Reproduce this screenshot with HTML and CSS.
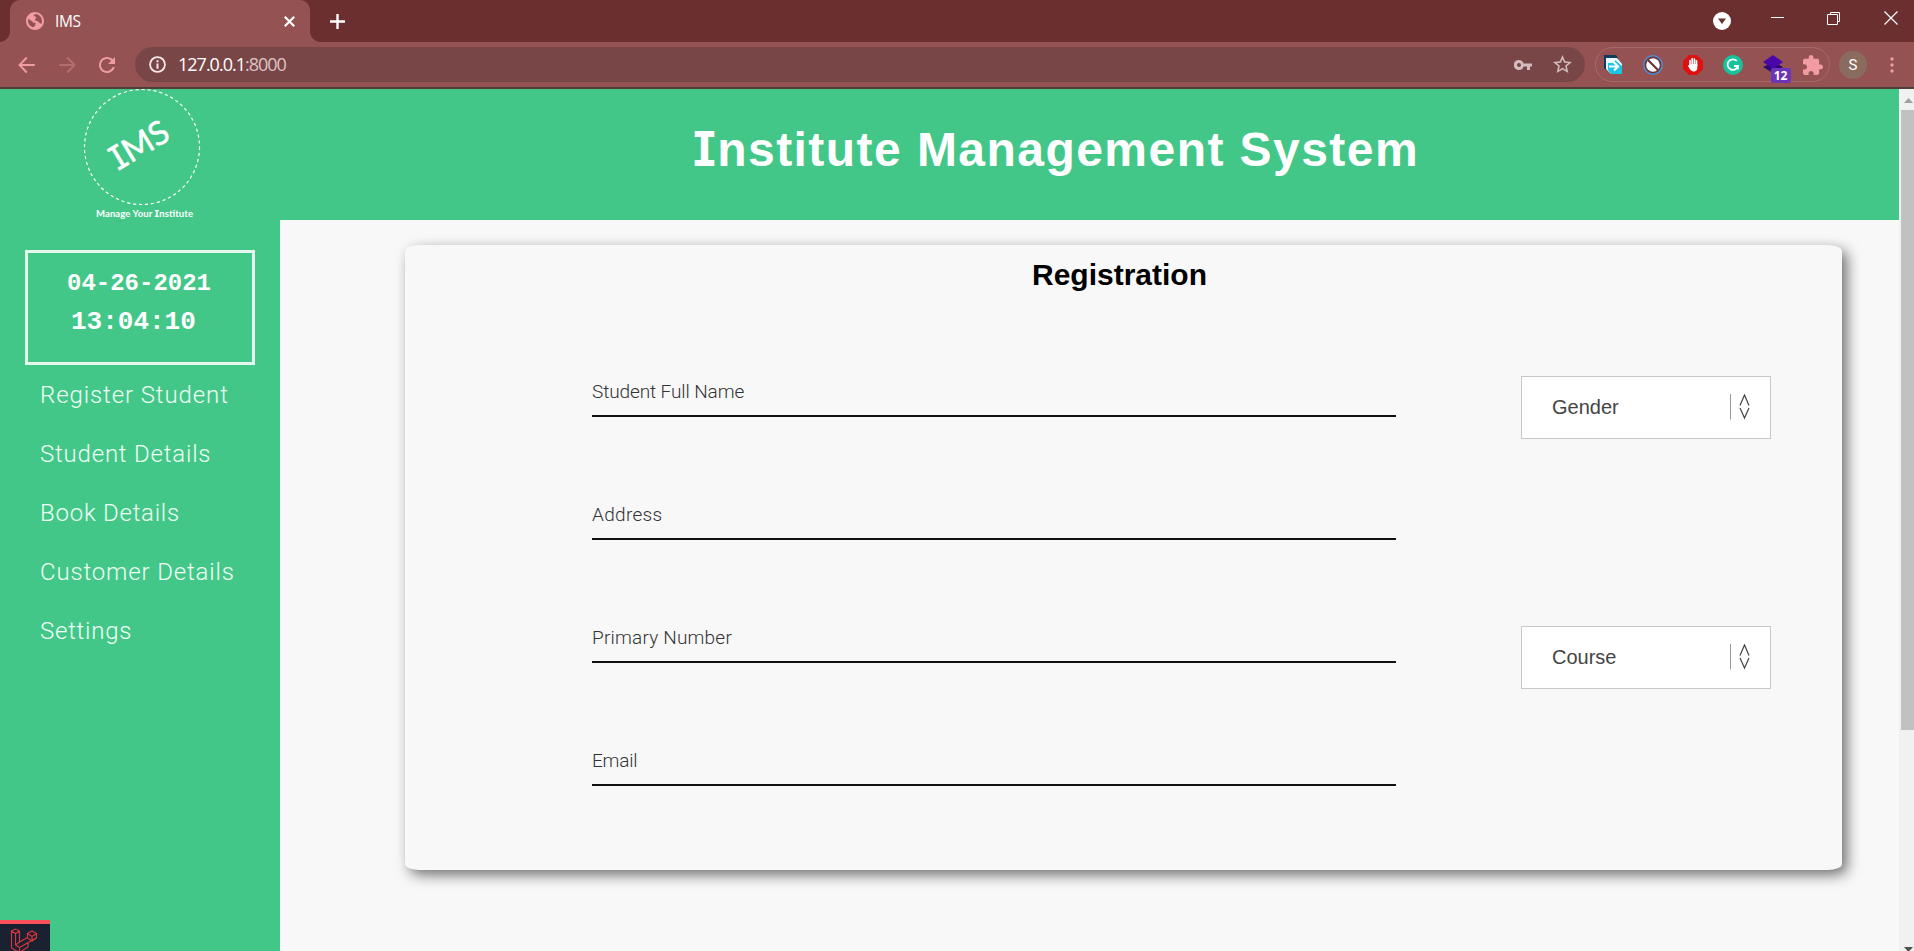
FILE: index.html
```html
<!DOCTYPE html>
<html lang="en">
<head>
<meta charset="utf-8">
<title>IMS</title>
<link rel="stylesheet" href="styles.css">
</head>
<body>
<div class="window">
  <div class="tabbar">
    <div class="tab">
      <svg class="globe" viewBox="2 2 20 20"><path fill="#f09ca0" d="M12 2C6.480 2 2 6.480 2 12s4.480 10 10 10 10-4.480 10-10S17.520 2 12 2zM4.500 9.500 9 12.500c.8.600 1 1.500 2 1.500h1.500v2.500l-2 2.500c-3.500-.5-6.200-3.500-6.200-7 0-.9 0-1.700.2-2.500zM13 4.200c3.800.5 6.800 3.800 6.800 7.800 0 1-.2 2-.5 2.800-1.300.2-2.500-.8-3.300-1.800-1-1-3.500-.5-3.800-2-.2-1.500 1.300-2 1-3.200-.6-1.300-2.500-.6-2.500-1.800 0-1 1-1.800 2.300-1.800z"/></svg>
      <span class="tab-title">IMS</span>
      <svg class="tab-close" viewBox="0 0 10 10"><path d="M.7.7l8.600 8.600M9.300.7L.7 9.300" stroke="#fff" stroke-width="1.900"/></svg>
    </div>
    <svg class="new-tab" viewBox="0 0 14 14"><path d="M7 0v14M0 7h14" stroke="#fff" stroke-width="2.200"/></svg>
    <div class="controls">
      <svg width="18" height="18" viewBox="0 0 18 18"><circle cx="9" cy="9" r="9" fill="#fff"/><path d="M5 6.500h8L9 12z" fill="#6b2f2f"/></svg>
      <svg width="13" height="18" viewBox="0 0 13 18"><path d="M0 5.500h13" stroke="#fff"/></svg>
      <svg width="14" height="18" viewBox="0 0 14 18"><path d="M.5 4.500h10v10H.5zM3.500 4V2.500h9v9H11" fill="none" stroke="#fff"/></svg>
      <svg width="14" height="18" viewBox="0 0 14 18"><path d="M.5 2.500l13 13M13.500 2.500l-13 13" stroke="#fff" stroke-width="1.200"/></svg>
    </div>
  </div>
  <div class="toolbar">
    <div class="nav">
      <svg class="i24" viewBox="0 0 24 24"><path d="M19.800 12H5M11.800 4.500 4.500 12l7.300 7.500" fill="none" stroke="#f09ca0" stroke-width="1.900"/></svg>
      <svg class="i24 dim" viewBox="0 0 24 24"><path d="M4.200 12H19M12.200 4.500l7.300 7.500-7.300 7.500" fill="none" stroke="#f09ca0" stroke-width="1.900"/></svg>
      <svg class="i24" viewBox="0 0 24 24"><path fill="#f09ca0" d="M17.650 6.350C16.200 4.900 14.210 4 12 4c-4.420 0-7.990 3.580-7.990 8s3.570 8 7.990 8c3.730 0 6.840-2.550 7.730-6h-2.080c-.82 2.330-3.040 4-5.650 4-3.310 0-6-2.690-6-6s2.690-6 6-6c1.660 0 3.140.69 4.220 1.780L13 11h7V4l-2.350 2.350z"/></svg>
    </div>
    <div class="omnibox">
      <svg class="info" viewBox="0 0 16 16"><circle cx="8" cy="8" r="7" fill="none" stroke="#fbe6e6" stroke-width="1.700"/><path d="M8 7v5M8 4v1.800" stroke="#fbe6e6" stroke-width="1.900"/></svg>
      <span class="url">127.0.0.1<span class="port">:8000</span></span>
      <svg class="key" viewBox="0 0 18 12"><path fill="#d2bcbd" fill-rule="evenodd" d="M5 1a5 5 0 1 0 4.600 6.500H13V11h3V7.500h2v-3H9.600A5 5 0 0 0 5 1zm0 3a2 2 0 1 1 0 4 2 2 0 0 1 0-4z"/></svg>
      <svg class="star" viewBox="2 2 20 20"><path fill="#d2bcbd" d="M22 9.240l-7.190-.62L12 2 9.190 8.630 2 9.240l5.460 4.730L5.820 21 12 17.270 18.180 21l-1.630-7.030L22 9.240zM12 15.400l-3.760 2.270 1-4.280-3.320-2.880 4.380-.38L12 6.100l1.710 4.040 4.380.38-3.320 2.880 1 4.280L12 15.400z"/></svg>
    </div>
    <div class="extensions">
      <svg class="i20" viewBox="0 0 20 20"><path d="M1 0h12l2 3v12H3L1 13z" fill="#123a5c"/><path d="M3 3h11l5 6v10H8l-5-5z" fill="#e8fafd"/><path d="M5 8h7V5l7 6v8H8l-3-4z" fill="#19c5e6"/><path d="M6 11.500h8M11 7.500l4 4-4 4" fill="none" stroke="#fff" stroke-width="2.200"/></svg>
      <svg class="i20" viewBox="0 0 20 20"><circle cx="10" cy="10" r="9.200" fill="#6f3136" stroke="#4d8fd6" stroke-width="1.500"/><circle cx="10" cy="10" r="6.800" fill="#fff"/><path d="M5 5l10 10" stroke="#6f3136" stroke-width="2.200"/></svg>
      <svg class="i20" viewBox="0 0 20 20"><path d="M6 0h8l6 6v8l-6 6H6l-6-6V6z" fill="#e01010"/><path d="M7 10V5.500M9.200 10V3.700M11.400 10V4M13.500 11V5.800" stroke="#fff" stroke-width="1.700" stroke-linecap="round"/><path d="M6.200 9h8.100v4c0 2-1.300 3.500-3.400 3.500S7.500 15 6.200 13L4.800 10.500l1.400-.2z" fill="#fff"/></svg>
      <svg class="i20" viewBox="0 0 20 20"><circle cx="10" cy="10" r="10" fill="#16c39a"/><path d="M13.800 6A5.300 5.300 0 1 0 15 11h-4M15 10v4.500" fill="none" stroke="#fff" stroke-width="1.800"/></svg>
      <div class="ext-badge">
        <svg class="i20" viewBox="0 0 20 20"><path d="M0 12l10-5 10 5-10 6z" fill="#2c0873"/><path d="M0 7l10-7 10 7-10 7z" fill="#4a06a8"/></svg>
        <span class="badge">12</span>
      </div>
      <svg class="i20" viewBox="2 1 21 21"><path fill="#f09ca0" d="M20.500 11H19V7c0-1.100-.9-2-2-2h-4V3.500C13 2.120 11.880 1 10.500 1S8 2.120 8 3.500V5H4c-1.100 0-1.990.9-1.990 2v3.800H3.500c1.490 0 2.700 1.210 2.700 2.700s-1.210 2.700-2.700 2.700H2V20c0 1.100.9 2 2 2h3.800v-1.500c0-1.490 1.210-2.700 2.700-2.700 1.490 0 2.700 1.210 2.700 2.700V22H17c1.100 0 2-.9 2-2v-4h1.500c1.380 0 2.500-1.120 2.500-2.500S21.880 11 20.500 11z"/></svg>
    </div>
    <span class="avatar">S</span>
    <svg class="dots" viewBox="0 0 4 16"><circle cx="2" cy="2" r="1.700" fill="#f09ca0"/><circle cx="2" cy="8" r="1.700" fill="#f09ca0"/><circle cx="2" cy="14" r="1.700" fill="#f09ca0"/></svg>
  </div>

  <div class="page">
    <aside class="sidebar">
      <svg class="logo" viewBox="0 0 180 133"><circle cx="82" cy="58" r="57.500" fill="none" stroke="#fff" stroke-width="1.200" stroke-dasharray="3.200 2.800"/>
        <text class="logo-mark" transform="translate(58 82) rotate(-31)"><tspan class="serif-i">I</tspan>MS</text>
        <text class="logo-tag" x="36" y="128" textLength="97">Manage Your <tspan class="serif-i">I</tspan>nstitute</text></svg>
      <div class="clock"><div class="date">04-26-2021</div><div class="time">13:04:10</div></div>
      <nav class="menu">
        <a class="w1">Register Student</a>
        <a class="w2">Student Details</a>
        <a class="w3">Book Details</a>
        <a class="w4">Customer Details</a>
        <a class="w5">Settings</a>
      </nav>
      <div class="debugbar"><svg viewBox="0 0 28 24"><path d="M1.500 3 5.500 1l4 2-4 2.500-4-2.500v17l8 4.500L18 19v-4.500M5.500 5.500v11.500l4 2.500M9.500 3v11l-4 3M9.500 14l8-4.500M9.500 19.500 26 10M9.500 19.500v5M17.500 5.500 22 3l4.500 2.500L22 8.500zM17.500 5.500v4.500l4.500 3V8.500M26.500 5.500V10L22 13" fill="none" stroke="#d9363e" stroke-width="1.100"/></svg></div>
    </aside>
    <div class="body">
      <header class="header"><h1><span class="serif-i">I</span>nstitute Management System</h1></header>
      <main class="main">
        <section class="card">
          <h2>Registration</h2>
          <div class="form">
            <div class="fields">
              <label class="field f1">Student Full Name</label>
              <label class="field f2">Address</label>
              <label class="field f3">Primary Number</label>
              <label class="field f4">Email</label>
            </div>
            <div class="selects">
              <div class="select"><span>Gender</span><svg viewBox="0 0 20 26"><path d="M.5 0v25.500" stroke="#999"/><path d="M10 11.500 14.500 1 19 11.500M10 14l4.500 10L19 14" fill="none" stroke="#444" stroke-width="1.200"/></svg></div>
              <div class="select"><span>Course</span><svg viewBox="0 0 20 26"><path d="M.5 0v25.500" stroke="#999"/><path d="M10 11.500 14.500 1 19 11.500M10 14l4.500 10L19 14" fill="none" stroke="#444" stroke-width="1.200"/></svg></div>
            </div>
          </div>
        </section>
      </main>
    </div>
    <div class="scrollbar">
      <svg viewBox="0 0 15 21"><path d="M5 14h9l-4.500-5z" fill="#a0a0a0"/></svg>
      <div class="thumb"></div>
      <svg class="down" viewBox="0 0 15 5"><path d="M5 1h9l-4.500 5z" fill="#505050"/></svg>
    </div>
  </div>
</div>
</body>
</html>
```
FILE: styles.css
```css
* { box-sizing: border-box; }
body { margin: 0; overflow: hidden; font-family: Roboto, "Liberation Sans", sans-serif; }
svg { display: block; flex: none; }
h1, h2 { margin: 0; }
.window { width: 1914px; height: 951px; display: flex; flex-direction: column; }

.tabbar { height: 42px; background: #6b2f2f; display: flex; align-items: flex-start; padding-left: 10px; }
.tab { width: 300px; height: 42px; background: #955253; border-radius: 10px 10px 0 0; display: flex; align-items: center; padding: 0 15px 0 16px; position: relative; }
.tab::before, .tab::after { content: ""; position: absolute; bottom: 0; width: 10px; height: 10px; }
.tab::before { left: -10px; background: radial-gradient(circle at 0 0, transparent 9.500px, #955253 10px); }
.tab::after { right: -10px; background: radial-gradient(circle at 100% 0, transparent 9.500px, #955253 10px); }
.globe { width: 18px; height: 18px; }
.tab-title { margin-left: 11px; flex: 1; color: #fff; font: 15.500px/20px "Open Sans", sans-serif; letter-spacing: -.4px; padding-bottom: 1px; }
.tab-close { width: 11px; height: 11px; }
.new-tab { width: 15px; height: 15px; margin: 14px 0 0 20px; }
.controls { margin: 9px 16px 0 auto; display: flex; }
.controls svg:nth-child(1) { margin-top: 3px; margin-right: 40px; }
.controls svg:nth-child(2) { margin-top: 3px; margin-right: 43px; }
.controls svg:nth-child(3) { margin-top: 1px; margin-right: 43px; }

.toolbar { height: 47px; background: #955253; border-bottom: 2px solid #4f3f38; display: flex; align-items: center; padding: 0 20px 0 7px; }
.nav { display: flex; gap: 16px; width: 128px; padding-left: 8px; }
.i24 { width: 24px; height: 24px; }
.dim { opacity: .35; }
.omnibox { width: 1450px; height: 35px; border-radius: 18px; background: #794648; display: flex; align-items: center; padding: 0 13px 0 14px; }
.info { width: 17px; height: 17px; }
.url { margin-left: 12px; flex: 1; color: #fff; font: 18px/24px "Open Sans", sans-serif; letter-spacing: -1px; padding-bottom: 1px; }
.port { color: #dcc3c3; }
.key { width: 18px; height: 12px; margin-right: 21px; }
.star { width: 19px; height: 19px; }
.extensions { width: 235px; height: 35px; margin-left: 10px; border: 1px solid #a8696a; border-radius: 18px; display: flex; align-items: center; justify-content: center; gap: 20px; }
.i20 { width: 20px; height: 20px; }
.ext-badge { position: relative; }
.badge { position: absolute; left: 8px; top: 13px; width: 20px; height: 15px; border-radius: 2px; background: #6c35b5; color: #fff; font: bold 12px/15px "Open Sans", sans-serif; text-align: center; }
.avatar { width: 28px; height: 28px; margin-left: 9px; border-radius: 50%; background: #8a6c5e; color: #fff; font-size: 15px; line-height: 28px; text-align: center; }
.dots { width: 4px; height: 16px; margin-left: auto; }

.page { height: 862px; display: flex; background: #f8f8f8; }
.sidebar { width: 280px; background: #43c788; color: #fff; display: flex; flex-direction: column; }
.logo { width: 180px; height: 133px; margin-left: 60px; }
.logo-mark { font: 400 33px Lato, sans-serif; fill: #fff; stroke: #fff; stroke-width: .5px; }
.serif-i { font-family: Inter, sans-serif; font-feature-settings: "cv08" 1; }
.logo-tag { font: bold 9.500px Lato, sans-serif; fill: #fff; }
.clock { width: 230px; height: 115px; margin: 28px 0 0 25px; border: 3px solid #e4f8ee; font-family: "Liberation Mono", monospace; font-weight: bold; }
.date { font-size: 24px; line-height: 38px; margin: 12px 0 0 39px; }
.time { font-size: 26px; line-height: 38px; margin-left: 43px; }
.menu { display: flex; flex-direction: column; padding: 1px 0 0 40px; font-size: 24px; font-weight: 300; line-height: 59px; color: #effff6; }
.w1 { letter-spacing: .9px; }
.w2 { letter-spacing: .8px; }
.w3 { letter-spacing: .75px; }
.w4 { letter-spacing: .85px; }
.w5 { letter-spacing: .75px; }
.debugbar { width: 50px; height: 31px; margin-top: auto; border-top: 4px solid #f9515b; background: #1a2130; padding: 4px 0 0 10px; overflow: hidden; }
.debugbar svg { width: 28px; height: 24px; }

.body { width: 1619px; display: flex; flex-direction: column; }
.header { height: 131px; background: #43c788; color: #fff; text-align: center; padding-right: 67px; }
h1 { font: bold 48px/119px "Liberation Sans", sans-serif; letter-spacing: 1.450px; }
.main { padding: 25px 0 0 125px; }
.card { width: 1437px; height: 625px; border-radius: 1%; background: #f8f8f8; box-shadow: 5px 5px 14px #707070; }
h2 { font: bold 30px/59px "Liberation Sans", sans-serif; height: 131px; padding-right: 8px; text-align: center; }
.form { display: flex; padding-left: 187px; gap: 125px; }
.fields { width: 804px; display: flex; flex-direction: column; gap: 82px; }
.field { height: 41px; border-bottom: 2px solid #111; font-size: 19px; font-weight: 300; line-height: 32px; color: #333; }
.f1 { letter-spacing: -.1px; }
.f2 { letter-spacing: .3px; }
.f3 { letter-spacing: .2px; }
.f4 { letter-spacing: -.2px; }
.selects { display: flex; flex-direction: column; gap: 187px; }
.select { width: 250px; height: 63px; border: 1px solid #c8c8c8; background: #fff; display: flex; align-items: center; justify-content: space-between; padding: 0 20px 0 30px; color: #444; font: 20px "Liberation Sans", sans-serif; }
.select svg { width: 20px; height: 26px; margin-bottom: 2px; }

.scrollbar { width: 15px; background: #f1f1f1; display: flex; flex-direction: column; }
.thumb { width: 13px; height: 620px; margin-left: 2px; background: #c1c1c1; }
.down { margin-top: auto; height: 5px; width: 15px; }
```
